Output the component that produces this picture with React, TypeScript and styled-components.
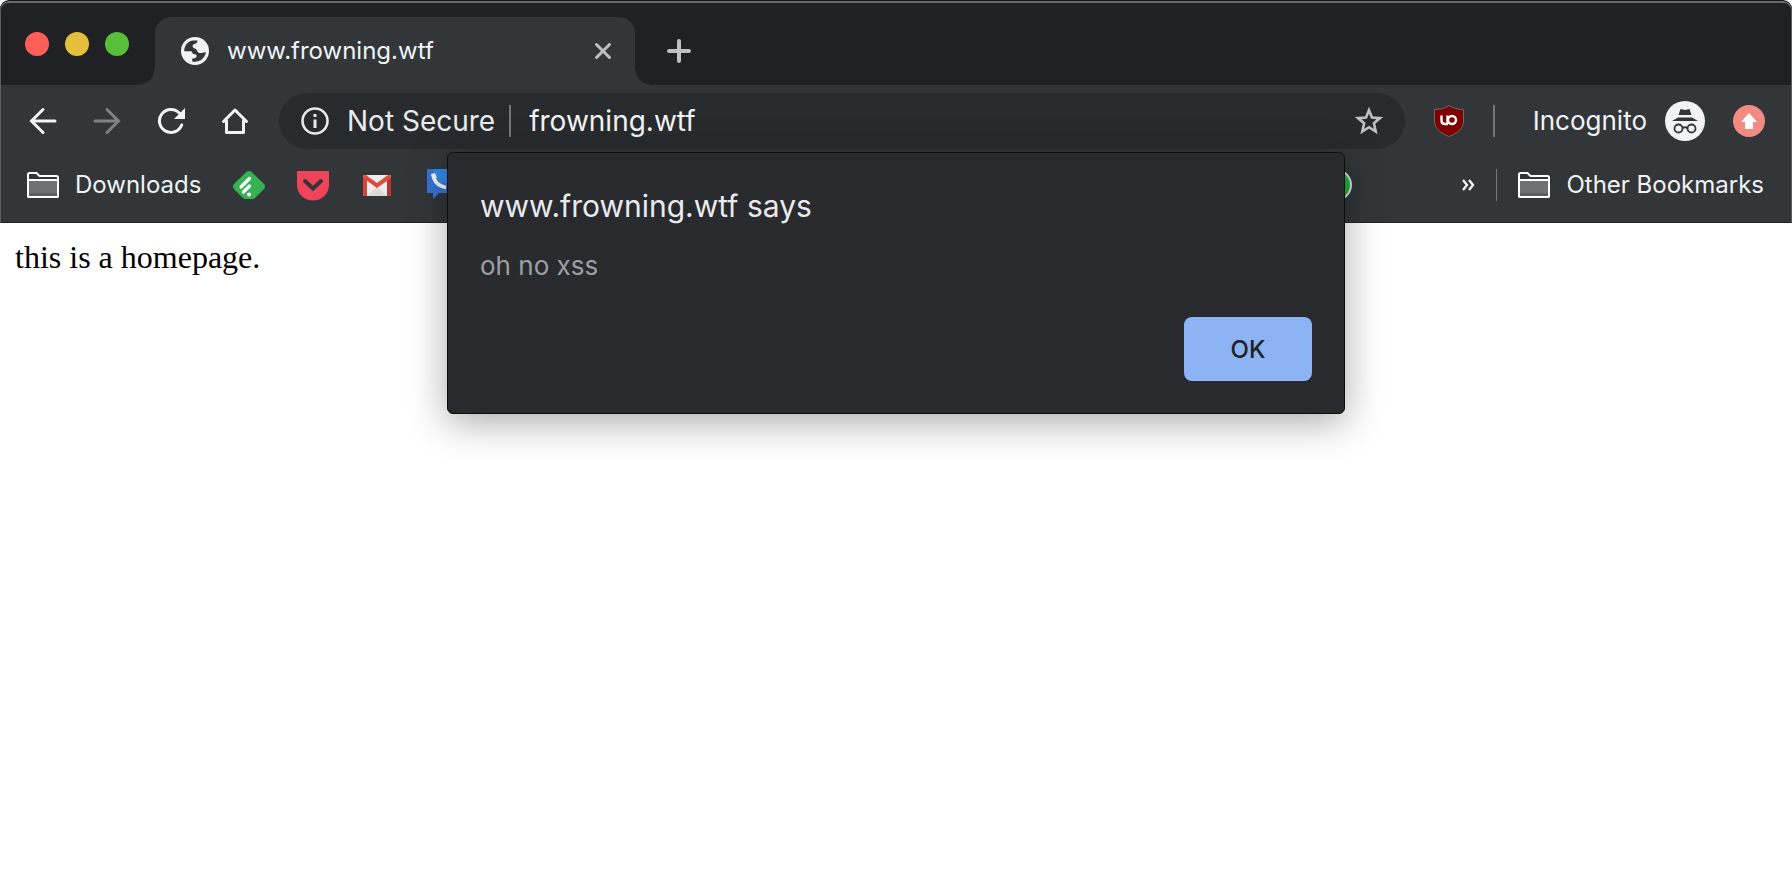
import React from "react";
import styled, { createGlobalStyle } from "styled-components";

const ui = `Inter, "Liberation Sans", sans-serif`;

const GlobalStyle = createGlobalStyle`
  * { box-sizing: border-box; }
  body { margin: 0; background: #fff; }
  button, input { font: inherit; color: inherit; border: 0; padding: 0; background: none; }
  button { cursor: pointer; }
  a { color: inherit; text-decoration: none; }
  svg { display: block; flex: none; }
`;

const Window = styled.div`
  position: relative;
  min-height: 100vh;
  padding-top: 1px;
  background: #fff;
  font-family: ${ui};
`;

const Chrome = styled.header`
  color: #f1f3f4;
  background: #323639;
  border: 1px solid #5c5e61;
  border-top: 2px solid #68686b;
  border-bottom: 1px solid #222427;
  border-radius: 9px 9px 0 0;
  box-shadow: 0 -1px 0 #141416;
  overflow: hidden;
`;

const TabStrip = styled.div`
  display: flex;
  align-items: flex-end;
  height: 82px;
  background: #202124;
`;

const Lights = styled.div`
  display: flex;
  align-self: flex-start;
  gap: 16px;
  width: 154px;
  padding: 29px 0 0 24px;
`;

const Light = styled.button<{ $color: string }>`
  width: 24px;
  height: 24px;
  border-radius: 50%;
  background: ${(p) => p.$color};
`;

const Tab = styled.div`
  position: relative;
  display: flex;
  align-items: center;
  width: 480px;
  height: 68px;
  padding: 0 21px 0 26px;
  border-radius: 16px 16px 0 0;
  background: #323639;
  font-size: 24px;
  line-height: 32px;

  &::before,
  &::after {
    content: "";
    position: absolute;
    bottom: 0;
    width: 16px;
    height: 16px;
  }
  &::before {
    right: 100%;
    background: radial-gradient(circle at 0 0, transparent 15px, #323639 16px);
  }
  &::after {
    left: 100%;
    background: radial-gradient(circle at 100% 0, transparent 15px, #323639 16px);
  }
`;

const TabTitle = styled.span`
  flex: 1;
  padding-left: 18px;
`;

const NewTab = styled.button`
  align-self: center;
  margin: 14px 0 0 32px;
`;

const Toolbar = styled.div`
  display: flex;
  align-items: center;
  height: 72px;
  padding: 0 26px 0 10px;
  font-size: 26px;
  line-height: 32px;
`;

const ToolButton = styled.button`
  display: flex;
  align-items: center;
  justify-content: center;
  width: 64px;
  height: 56px;
`;

const Omnibox = styled.div`
  display: flex;
  flex: 1;
  align-items: center;
  height: 56px;
  margin: 0 28px 0 12px;
  padding: 0 22px;
  border-radius: 28px;
  background: #282b2e;
  font-size: 28px;
`;

const Security = styled.button`
  display: flex;
  align-items: center;
  gap: 18px;
  white-space: nowrap;
  color: #e8eaed;
`;

const Address = styled.input`
  flex: 1;
  min-width: 0;
  outline: 0;
`;

const Divider = styled.span<{ $left: number; $right: number; $thin?: boolean }>`
  width: ${(p) => (p.$thin ? 1 : 2)}px;
  height: 32px;
  margin: 0 ${(p) => p.$right}px 0 ${(p) => p.$left}px;
  background: #73767a;
`;

const Profile = styled.button`
  display: flex;
  align-items: center;
  gap: 18px;
  margin-right: 28px;
`;

const Bookmarks = styled.nav`
  display: flex;
  align-items: center;
  height: 65px;
  padding: 0 27px 9px 26px;
  font-size: 24px;
  line-height: 32px;
`;

const Folder = styled.button`
  display: flex;
  align-items: center;
  gap: 16px;
  white-space: nowrap;
`;

const Links = styled.div`
  display: flex;
  flex: 1;
  gap: 32px;
  margin: 0 109px 0 32px;
`;

const LinkIcon = styled.a<{ $last?: boolean }>`
  margin-left: ${(p) => (p.$last ? "auto" : "0")};
`;

const Page = styled.main`
  padding: 16px 15px;
  font: 32px/36px "Liberation Serif", "Times New Roman", serif;
  color: #000;
`;

const Text = styled.p`
  margin: 0;
`;

const Alert = styled.section`
  position: absolute;
  top: 152px;
  left: 0;
  right: 0;
  width: 898px;
  margin: 0 auto;
  padding: 35px 32px 32px;
  display: flex;
  flex-direction: column;
  border: 1px solid #0c0d0e;
  border-radius: 6px;
  background: #292a2d;
  box-shadow: 0 8px 38px rgba(0, 0, 0, 0.34);
`;

const AlertTitle = styled.h1`
  margin: 0;
  font-size: 30px;
  font-weight: 400;
  line-height: 36px;
  color: #e8eaed;
`;

const AlertText = styled.p`
  margin: 26px 0 35px;
  font-size: 26px;
  line-height: 32px;
  color: #9aa0a6;
`;

const OkButton = styled.button`
  align-self: flex-end;
  width: 128px;
  height: 64px;
  border-radius: 8px;
  background: #8cb4f5;
  color: #202124;
  font-size: 24px;
  font-weight: 500;
`;

const FolderIcon = () => (
  <svg width="32" height="26" viewBox="0 0 32 26">
    <path d="M1 24V2.500Q1 1 2.500 1H9.500L12.500 4H29.500Q31 4 31 5.500V23.500Q31 25 29.500 25H2.500Q1 25 1 23.500Z" fill="#323639" stroke="#fff" strokeWidth="2" />
    <path d="M2 8H30V24H2Z" fill="#6f7275" />
    <path d="M1 8H31" stroke="#fff" strokeWidth="2" />
    <path d="M2 22.500H30" stroke="#55585b" strokeWidth="2" />
    <rect x="1" y="8" width="30" height="17" rx="1" fill="none" stroke="#fff" strokeWidth="2" />
  </svg>
);

export default function App() {
  return (
    <Window>
      <GlobalStyle />
      <Chrome>
        <TabStrip>
          <Lights>
            <Light $color="#ff5f57" aria-label="Close window" />
            <Light $color="#e5bf3c" aria-label="Minimize window" />
            <Light $color="#57c038" aria-label="Zoom window" />
          </Lights>
          <Tab>
            <svg width="28" height="28" viewBox="0 0 28 28">
              <circle cx="14" cy="14" r="14" fill="#f1f3f4" />
              <path
                d="M3.200 14.200C3.200 9 6.500 4.500 11.500 3.500H16.500C16.500 5.500 15.500 6.500 13.500 7C11.800 7.500 11.400 8.500 11.700 9.800C12 11 13.500 11.500 14.800 12C16 12.500 16 14.500 17.300 15.500C19 16.600 21 15.800 25 15.200C24 20.500 19.500 24.700 14 24.700C13 24.700 12 24.600 11.200 24.400V21.500C13 21.500 15.500 21 15.700 19C15.800 17.300 14 17.300 12.700 17C11 16.500 11.500 14.200 9.500 14.200Z"
                fill="#323639"
              />
            </svg>
            <TabTitle>www.frowning.wtf</TabTitle>
            <button aria-label="Close tab">
              <svg width="22" height="22" viewBox="0 0 22 22" stroke="#bdc1c6" strokeWidth="3" strokeLinecap="round">
                <path d="M4.500 4.500L17.500 17.500M17.500 4.500L4.500 17.500" />
              </svg>
            </button>
          </Tab>
          <NewTab aria-label="New tab">
            <svg width="24" height="24" viewBox="0 0 24 24" stroke="#bdc1c6" strokeWidth="4" strokeLinecap="round">
              <path d="M12 2V22M2 12H22" />
            </svg>
          </NewTab>
        </TabStrip>

        <Toolbar>
          <ToolButton aria-label="Back">
            <svg width="28" height="28" viewBox="0 0 28 28" fill="none" stroke="#f1f3f4" strokeWidth="3" strokeLinecap="round">
              <path d="M14 2.500L2.500 14L14 25.500M3 14H26" />
            </svg>
          </ToolButton>
          <ToolButton aria-label="Forward">
            <svg width="28" height="28" viewBox="0 0 28 28" fill="none" stroke="#7f8284" strokeWidth="3" strokeLinecap="round">
              <path d="M14 2.500L25.500 14L14 25.500M25 14H2" />
            </svg>
          </ToolButton>
          <ToolButton aria-label="Reload">
            <svg width="28" height="28" viewBox="0 0 28 28">
              <path d="M24.700 18A11.500 11.500 0 1 1 22.500 6.200" fill="none" stroke="#f1f3f4" strokeWidth="3" strokeLinecap="round" />
              <path d="M28 1V12H17Z" fill="#f1f3f4" />
            </svg>
          </ToolButton>
          <ToolButton aria-label="Home">
            <svg width="28" height="28" viewBox="0 0 28 28" fill="none" stroke="#f1f3f4" strokeWidth="3" strokeLinecap="round" strokeLinejoin="round">
              <path d="M2.500 14.500L14 3L25.500 14.500" />
              <path d="M5.500 13.500V25.500H22.500V13.500" />
            </svg>
          </ToolButton>
          <Omnibox>
            <Security>
              <svg width="28" height="28" viewBox="0 0 28 28" fill="none" stroke="#e8eaed">
                <circle cx="14" cy="14" r="12.500" strokeWidth="2.600" />
                <path d="M14 12.500V21M14 7V10" strokeWidth="3" />
              </svg>
              Not Secure
            </Security>
            <Divider $left={14} $right={18} />
            <Address aria-label="Address" defaultValue="frowning.wtf" />
            <button aria-label="Bookmark this page">
              <svg width="28" height="28" viewBox="0 0 28 28" fill="none" stroke="#bdc1c6" strokeWidth="2.600">
                <path d="M14 3.200L17 10.500L24.900 11.100L18.900 16.200L20.700 24.500L14 20.200L7.300 24.500L9.100 16.200L3.100 11.100L11 10.500Z" />
              </svg>
            </button>
          </Omnibox>
          <button aria-label="uBlock Origin">
            <svg width="32" height="32" viewBox="0 0 32 32">
              <path d="M16 .5C20 3.500 25 4.500 30.500 4.500V16C30.500 23 25 28 16 31.500C7 28 1.500 23 1.500 16V4.500C7 4.500 12 3.500 16 .5Z" fill="#800000" stroke="#6d6a6c" />
              <path d="M8.500 10.500V15.500Q8.500 19 12 19H15M14.500 10.500V19" fill="none" stroke="#fff" strokeWidth="2.400" />
              <circle cx="19" cy="15" r="4" fill="none" stroke="#fff" strokeWidth="2.400" />
            </svg>
          </button>
          <Divider $left={28} $right={38} />
          <Profile>
            Incognito
            <svg width="40" height="40" viewBox="0 0 40 40">
              <circle cx="20" cy="20" r="20" fill="#f1f3f4" />
              <path d="M15.500 8L20 9L24.500 8L26.500 14H13.500Z" fill="#323639" />
              <path d="M13 16.500H27L33 20H7Z" fill="#323639" />
              <g fill="none" stroke="#323639" strokeWidth="1.800">
                <circle cx="13.500" cy="27.500" r="4" />
                <circle cx="26.500" cy="27.500" r="4" />
                <path d="M17.500 27Q20 25.500 22.500 27" />
              </g>
            </svg>
          </Profile>
          <button aria-label="Update available">
            <svg width="32" height="32" viewBox="0 0 32 32">
              <circle cx="16" cy="16" r="16" fill="#f28b82" />
              <path d="M16 8L24 17H20V24H12V17H8Z" fill="#fff" />
            </svg>
          </button>
        </Toolbar>

        <Bookmarks aria-label="Bookmarks">
          <Folder>
            <FolderIcon />
            Downloads
          </Folder>
          <Links>
            <LinkIcon href="#feedly" aria-label="Feedly">
              <svg width="32" height="32" viewBox="0 0 32 32">
                <path d="M13 3.200Q16 .8 19 3.200L31 15Q33 17.500 31 20L22 29Q21 30 19.500 30H12.500Q11 30 10 29L1 20Q-1 17.500 1 15Z" fill="#35b253" />
                <path d="M8 18L16.500 9.500M10.500 23L16.500 17" stroke="#fff" strokeWidth="3.200" strokeLinecap="round" />
                <circle cx="16" cy="25.500" r="2" fill="#fff" />
              </svg>
            </LinkIcon>
            <LinkIcon href="#pocket" aria-label="Pocket">
              <svg width="32" height="32" viewBox="0 0 32 32">
                <path d="M0 2H32V16A16 15.500 0 0 1 0 16Z" fill="#ee4359" />
                <path d="M8 12L16 19.500L24 12" fill="none" stroke="#323639" strokeWidth="4" strokeLinecap="round" />
              </svg>
            </LinkIcon>
            <LinkIcon href="#gmail" aria-label="Gmail">
              <svg width="32" height="32" viewBox="0 0 32 32">
                <rect x="2" y="6" width="28" height="21" rx="1.500" fill="#ececec" />
                <path d="M6 27L16 18L26 27Z" fill="#d9d9d9" />
                <path d="M2 8V25.500Q2 27 3.500 27H6V11Z" fill="#d3463d" />
                <path d="M30 8V25.500Q30 27 28.500 27H26V11Z" fill="#b8352d" />
                <path d="M2 8Q2 6 4 6H5L16 14L27 6H28Q30 6 30 8V9L16 19L2 9Z" fill="#dd4b3e" />
              </svg>
            </LinkIcon>
            <LinkIcon href="#voice" aria-label="Voice">
              <svg width="32" height="32" viewBox="0 0 32 32">
                <path d="M2 0H32V24H14L8 30V24H2Z" fill="#3673d6" />
                <path d="M8 0H32V14H14Z" fill="#3289e8" />
                <path d="M8 5Q9 16 21 18.500" fill="none" stroke="#f2f7fc" strokeWidth="3.500" />
                <path d="M6 5L10 4L12 9L8 11Z" fill="#f2f7fc" />
              </svg>
            </LinkIcon>
            <LinkIcon href="#more" aria-label="Saved site" $last>
              <svg width="32" height="32" viewBox="0 0 32 32">
                <circle cx="16" cy="16" r="15" fill="#1fb141" stroke="#dedede" strokeWidth="2" />
              </svg>
            </LinkIcon>
          </Links>
          <button aria-label="More bookmarks">
            <svg width="14" height="14" viewBox="0 0 14 14" fill="none" stroke="#f1f3f4" strokeWidth="2.400">
              <path d="M2 2L6 7L2 12M8 2L12 7L8 12" />
            </svg>
          </button>
          <Divider $left={21} $right={21} $thin />
          <Folder>
            <FolderIcon />
            Other Bookmarks
          </Folder>
        </Bookmarks>
      </Chrome>

      <Page>
        <Text>this is a homepage.</Text>
      </Page>

      <Alert role="alertdialog" aria-labelledby="alert-title" aria-describedby="alert-text">
        <AlertTitle id="alert-title">www.frowning.wtf says</AlertTitle>
        <AlertText id="alert-text">oh no xss</AlertText>
        <OkButton>OK</OkButton>
      </Alert>
    </Window>
  );
}
